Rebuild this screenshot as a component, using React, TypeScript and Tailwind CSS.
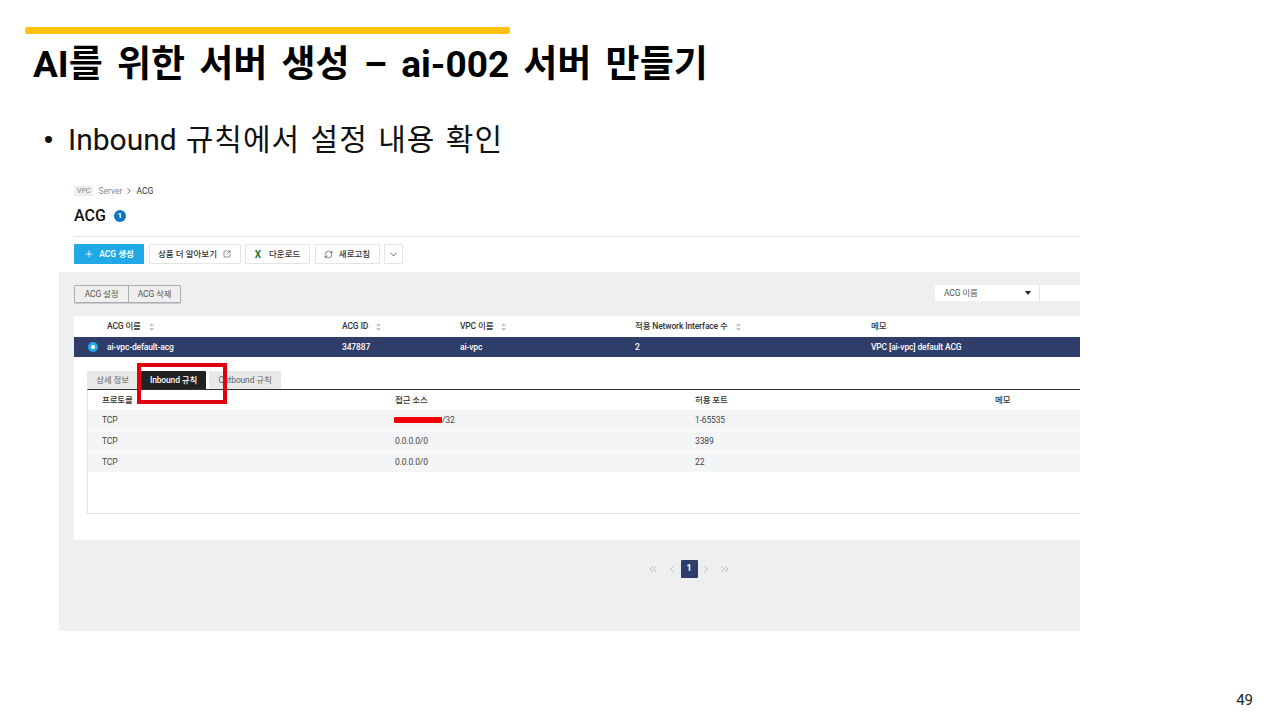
import React from 'react';
import {
  ChevronDown,
  ChevronLeft,
  ChevronRight,
  ChevronsLeft,
  ChevronsRight,
  Plus,
  RefreshCw,
  SquareArrowOutUpRight,
} from 'lucide-react';

const SortIcon = () => (
  <svg width="5" height="8" viewBox="0 0 5 8" className="ml-[8px]">
    <path d="M2.5 0 L5 3 H0 Z M2.5 8 L0 5 H5 Z" fill="#c4c8cc" />
  </svg>
);

const ToolButton: React.FC<{ className: string; children: React.ReactNode }> = ({ className, children }) => (
  <div className={`h-[20px] flex items-center justify-center bg-white border border-[#e4e4e4] rounded-[1px] text-[8.5px] font-medium text-[#333] ${className}`}>
    {children}
  </div>
);

const columns = [
  { label: 'ACG 이름', sort: true },
  { label: 'ACG ID', sort: true },
  { label: 'VPC 이름', sort: true },
  { label: '적용 Network Interface 수', sort: true },
  { label: '메모', sort: false },
];

const gridCols = 'grid grid-cols-[33px_235px_118px_175px_236px_1fr] items-center';
const ruleCols = 'grid grid-cols-[14px_293px_300px_300px_1fr] items-center';

const rules = [
  { source: '/32', port: '1-65535', redacted: true },
  { source: '0.0.0.0/0', port: '3389', redacted: false },
  { source: '0.0.0.0/0', port: '22', redacted: false },
];

export default function App() {
  return (
    <div
      className="relative w-[1280px] h-[720px] bg-white overflow-hidden"
      style={{ fontFamily: 'Roboto, "Noto Sans CJK KR", sans-serif' }}
    >
      <div className="ml-[25px] pt-[27px]">
        <div className="w-[485px] h-[7px] rounded-[2px] bg-[#ffc20e]" />
      </div>
      <h1 className="ml-[33px] mt-[5px] h-[52px] leading-[52px] text-[37px] font-bold text-black whitespace-nowrap [word-spacing:5px]">
        AI를 위한 서버 생성 – ai-002 서버 만들기
      </h1>
      <div className="ml-[43px] mt-[28px] h-[40px] flex items-center text-[30px] text-[#111] whitespace-nowrap">
        <span className="w-[25px] text-[30px] font-bold">•</span>
        <span>Inbound</span>
        <span className="ml-[9px] tracking-[1px] [word-spacing:2px]">규칙에서 설정 내용 확인</span>
      </div>

      {/* console capture */}
      <div className="ml-[59px] mt-[21px] w-[1021px] h-[451px] flex flex-col overflow-hidden text-[#333]">
        <div className="h-[92px] pl-[15px] bg-white shrink-0">
          <div className="h-[21px] pt-[1px] flex items-center text-[8.5px] text-[#888]">
            <span className="h-[10px] px-[3px] bg-[#eeeeee] rounded-[1px] text-[7px] leading-[10px] mr-[5px]">VPC</span>
            <span>Server</span>
            <ChevronRight size={10} strokeWidth={1.8} className="mx-[2px] text-[#333]" />
            <span className="text-[#333]">ACG</span>
          </div>
          <div className="h-[36px] border-b border-[#e5e5e5] flex items-center pb-[5px]">
            <span className="text-[16px] font-medium text-[#111] mr-[8px]">ACG</span>
            <span className="w-[12px] h-[12px] rounded-full bg-[#0b76c5] text-white text-[8px] font-bold flex items-center justify-center">1</span>
          </div>
          <div className="mt-[7px] flex gap-[4.5px]">
            <div className="w-[70px] h-[20px] flex items-center justify-center gap-[5px] bg-[#1fa9e6] rounded-[1px] text-white text-[8.5px] font-semibold">
              <Plus size={10} strokeWidth={2} />
              ACG 생성
            </div>
            <ToolButton className="w-[92px] gap-[6px]">
              상품 더 알아보기
              <SquareArrowOutUpRight size={8} strokeWidth={1.6} />
            </ToolButton>
            <ToolButton className="w-[65px] gap-[8px]">
              <span className="text-[#1d7a3e] font-bold text-[10px]">X</span>
              다운로드
            </ToolButton>
            <ToolButton className="w-[65px] gap-[6px]">
              <RefreshCw size={9} strokeWidth={1.6} />
              새로고침
            </ToolButton>
            <ToolButton className="w-[19px]">
              <ChevronDown size={11} strokeWidth={1.6} />
            </ToolButton>
          </div>
        </div>

        <div className="flex-1 bg-[#efefef] pl-[15px] flex flex-col">
          <div className="h-[44px] flex items-start justify-between pt-[13px]">
            <div className="flex h-[18px] w-[107px] border border-[#a9adb3] rounded-[1px] text-[8.5px] tracking-[-0.15px] text-[#555] shadow-[0_1px_0_#ccc]">
              <div className="w-[54px] flex items-center justify-center border-r border-[#a9adb3]">ACG 설정</div>
              <div className="flex-1 flex items-center justify-center">ACG 삭제</div>
            </div>
            <div className="flex h-[16px] bg-white text-[8.5px] tracking-[-0.15px] text-[#555]">
              <div className="w-[105px] pl-[9px] pr-[8px] flex items-center justify-between border-r border-[#e5e5e5]">
                ACG 이름
                <span className="w-0 h-0 border-x-[3px] border-x-transparent border-t-[4px] border-t-[#222]" />
              </div>
              <div className="w-[40px]" />
            </div>
          </div>

          <div className="h-[224px] bg-white flex flex-col">
            <div className={`${gridCols} h-[21px] text-[8.5px] tracking-[-0.15px] font-medium text-[#333]`}>
              <span />
              {columns.map((c) => (
                <span key={c.label} className="flex items-center whitespace-nowrap">
                  {c.label}
                  {c.sort && <SortIcon />}
                </span>
              ))}
            </div>
            <div className={`${gridCols} h-[20px] bg-[#2f3d6b] text-[8.5px] tracking-[-0.15px] font-medium text-white`}>
              <span className="pl-[14px]">
                <span className="w-[10px] h-[10px] rounded-full bg-[#2aa8e8] flex items-center justify-center">
                  <span className="w-[4px] h-[4px] rounded-full bg-white" />
                </span>
              </span>
              <span>ai-vpc-default-acg</span>
              <span>347887</span>
              <span>ai-vpc</span>
              <span>2</span>
              <span>VPC [ai-vpc] default ACG</span>
            </div>

            <div className="mt-[14px] ml-[13px] flex h-[18px] items-end gap-[3px] text-[8.5px] tracking-[-0.15px]">
              <div className="w-[51px] h-[18px] flex items-center justify-center bg-[#e8e8e8] text-[#666]">상세 정보</div>
              <div className="w-[65px] h-[18px] flex items-center justify-center bg-[#222222] text-white font-medium rounded-t-[1px]">Inbound 규칙</div>
              <div className="w-[72px] h-[18px] flex items-center justify-center bg-[#e8e8e8] text-[#666]">Outbound 규칙</div>
            </div>
            <div className="ml-[13px] h-[125px] border-t border-t-[#333] border-l border-b border-l-[#e3e3e3] border-b-[#e3e3e3] text-[8.5px] tracking-[-0.15px]">
              <div className={`${ruleCols} h-[20px] font-medium text-[#333]`}>
                <span />
                <span>프로토콜</span>
                <span>접근 소스</span>
                <span>허용 포트</span>
                <span>메모</span>
              </div>
              {rules.map((r) => (
                <div key={r.port} className={`${ruleCols} h-[20px] mb-px bg-[#f4f5f7] text-[#444]`}>
                  <span />
                  <span>TCP</span>
                  <span className="flex items-center">
                    {r.redacted && <span className="w-[48px] h-[6px] ml-[-1px] bg-[#f00000] rounded-[1px]" />}
                    {r.source}
                  </span>
                  <span>{r.port}</span>
                  <span />
                </div>
              ))}
            </div>
          </div>

          <div className="flex-1 flex items-start pl-[573px] pt-[20px] text-[#a8abb0] gap-[7px]">
            <ChevronsLeft size={12} strokeWidth={1.6} className="mt-[3px]" />
            <div className="flex items-start gap-[2.5px]">
              <ChevronLeft size={12} strokeWidth={1.6} className="mt-[3px]" />
              <span className="w-[17px] h-[18px] rounded-[1px] bg-[#2f3d6b] text-white text-[9px] font-bold flex items-center justify-center">1</span>
              <ChevronRight size={12} strokeWidth={1.6} className="mt-[3px]" />
            </div>
            <ChevronsRight size={12} strokeWidth={1.6} className="mt-[3px]" />
          </div>
        </div>
      </div>

      {/* annotation drawn over the capture */}
      <div className="absolute left-[137px] top-[363px] w-[90px] h-[41px] border-[4px] border-[#e00010]" />

      <div className="absolute right-[27px] top-[689px] text-[15px] text-[#222]">49</div>
    </div>
  );
}
